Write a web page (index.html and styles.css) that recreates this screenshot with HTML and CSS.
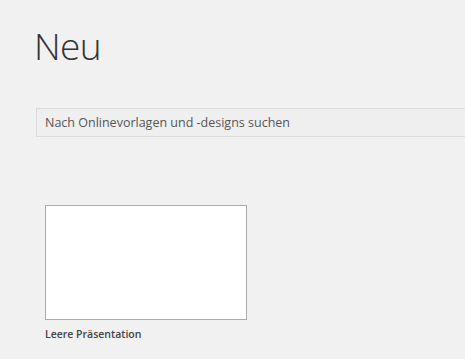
FILE: index.html
```html
<!DOCTYPE html>
<html lang="de">
<head>
    <meta charset="UTF-8">
    <meta name="viewport" content="width=device-width, initial-scale=1.0">
    <title>Neu</title>
    <link rel="stylesheet" href="styles.css">
</head>
<body>
    <main class="neu">
        <h1 class="titel">Neu</h1>
        <div class="suche">
            <input type="text" class="suche-feld" placeholder="Nach Onlinevorlagen und -designs suchen">
        </div>
        <div class="vorlagen">
            <div class="vorlage">
                <div class="vorlage-bild"></div>
                <p class="vorlage-name">Leere Präsentation</p>
            </div>
        </div>
    </main>
</body>
</html>
```

FILE: styles.css
```css
body {
    margin: 0;
    padding: 0;
    background-color: #f1f1f1;
    font-family: "Open Sans", "Noto Sans", sans-serif;
    overflow: hidden;
}
.neu {
    padding: 18px 0 0 36px;
}
.titel {
    margin: 0 0 0 -2px;
    font-size: 37px;
    font-weight: 300;
    color: #333;
    line-height: 56px;
    letter-spacing: -0.6px;
}
.suche {
    margin-top: 34px;
}
.suche-feld {
    box-sizing: border-box;
    width: 440px;
    height: 29px;
    margin: 0;
    padding: 0 8px;
    border: 1px solid #dcdcdc;
    border-right: none;
    background-color: #efefef;
    font-family: inherit;
    font-size: 12.5px;
    color: #555;
    outline: none;
}
.suche-feld::placeholder {
    color: #555;
}
.vorlagen {
    display: flex;
    padding: 68px 0 0 9px;
}
.vorlage-bild {
    width: 200px;
    height: 113px;
    background-color: #fff;
    border: 1px solid #ababab;
}
.vorlage-name {
    margin: 7px 0 0 0;
    font-size: 10.5px;
    font-weight: 600;
    color: #444;
}
```
